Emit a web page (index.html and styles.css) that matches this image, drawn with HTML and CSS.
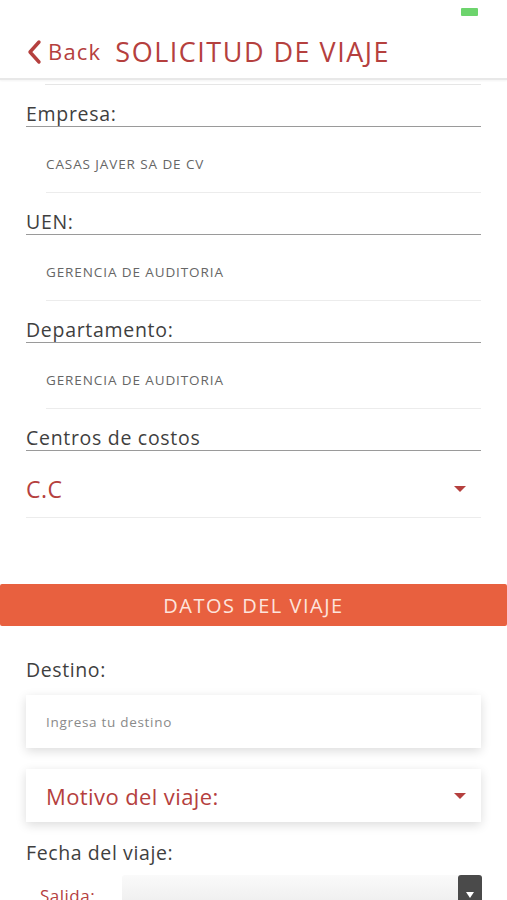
FILE: index.html
```html
<!DOCTYPE html>
<html lang="es">
<head>
<meta charset="utf-8">
<title>Solicitud de viaje</title>
<link rel="stylesheet" href="styles.css">
</head>
<body>
<div class="app">
  <div class="status"><span class="battery"></span></div>
  <header class="topbar">
    <a class="back">
      <svg class="chev" width="16" height="26" viewBox="0 0 16 26"><path d="M13 3 L4 13 L13 23" fill="none" stroke="#b5403e" stroke-width="3.4" stroke-linecap="round" stroke-linejoin="round"/></svg>
      <span>Back</span>
    </a>
    <h1 class="title">SOLICITUD DE VIAJE</h1>
  </header>
  <main class="content">
    <div class="topline"></div>
    <section class="field">
      <div class="label">Empresa:</div>
      <div class="value">CASAS JAVER SA DE CV</div>
    </section>
    <section class="field">
      <div class="label">UEN:</div>
      <div class="value">GERENCIA DE AUDITORIA</div>
    </section>
    <section class="field">
      <div class="label">Departamento:</div>
      <div class="value">GERENCIA DE AUDITORIA</div>
    </section>
    <section class="field">
      <div class="label">Centros de costos</div>
      <div class="select"><span>C.C</span><span class="caret"></span></div>
    </section>
    <div class="banner">DATOS DEL VIAJE</div>
    <div class="plain-label dest">Destino:</div>
    <div class="card input">Ingresa tu destino</div>
    <div class="card motivo"><span>Motivo del viaje:</span><span class="caret"></span></div>
    <div class="plain-label fecha">Fecha del viaje:</div>
    <div class="daterow">
      <span class="sal">Salida:</span>
      <div class="datebox"><span class="dbtn"><span class="wcaret"></span></span></div>
    </div>
  </main>
</div>
</body>
</html>
```
FILE: styles.css
```css
html, body { margin: 0; padding: 0; background: #fff; }
body { font-family: "Open Sans", "DejaVu Sans", sans-serif; color: #444; overflow: hidden; }
.app { width: 507px; height: 900px; overflow: hidden; }
.status { height: 24px; display: flex; justify-content: flex-end; align-items: flex-start; padding-right: 29px; }
.battery { margin-top: 8px; width: 17px; height: 8px; background: #6dd46d; border-radius: 1px; }
.topbar { height: 54px; display: flex; align-items: center; padding-left: 26px; border-bottom: 2px solid #e8e8e8; box-shadow: 0 1px 2px rgba(0,0,0,0.05); }
.back { display: flex; align-items: center; color: #b5403e; font-size: 22px; gap: 6px; letter-spacing: 1.2px; }
.chev { margin-top: 1px; }
.title { margin: 0 0 0 14px; font-weight: 400; font-size: 27px; color: #b5403e; letter-spacing: 1.5px; }
.content { display: flex; flex-direction: column; }
.topline { margin: 4px 26px 0 45px; height: 1px; background: #e6e6e6; }
.field { margin: 0 26px; }
.label { font-size: 19.5px; color: #3f3f3f; line-height: 24px; padding-top: 17px; border-bottom: 1px solid #9a9a9a; letter-spacing: 0.7px; }
.value { margin-left: 20px; height: 66px; display: flex; align-items: center; font-size: 13.5px; color: #666; border-bottom: 1px solid #ececec; padding-top: 8px; box-sizing: border-box; letter-spacing: 0.9px; }
.select { height: 67px; display: flex; align-items: center; justify-content: space-between; font-size: 23px; color: #b5403e; border-bottom: 1px solid #ececec; padding: 10px 15px 0 0; box-sizing: border-box; letter-spacing: 0.5px; }
.caret { width: 0; height: 0; border-left: 6px solid transparent; border-right: 6px solid transparent; border-top: 6px solid #b5403e; }
.banner { margin-top: 66px; height: 42px; background: #e8603f; color: #fde4dc; display: flex; align-items: center; justify-content: center; font-size: 20px; letter-spacing: 1.5px; border-radius: 2px; }
.plain-label { margin: 0 26px; font-size: 19.5px; color: #3f3f3f; line-height: 26px; letter-spacing: 0.6px; }
.dest { margin-top: 31px; }
.card { margin: 0 26px; height: 53px; box-sizing: border-box; background: #fff; box-shadow: 0 3px 10px rgba(0,0,0,0.14); display: flex; align-items: center; padding: 0 15px 0 20px; }
.input { margin-top: 12px; font-size: 13.5px; color: #8a8a8a; letter-spacing: 0.7px; }
.motivo { margin-top: 21px; justify-content: space-between; font-size: 22px; color: #b5403e; letter-spacing: 0.4px; }
.fecha { margin-top: 18px; }
.daterow { margin: 9px 25px 0 40px; display: flex; align-items: flex-start; gap: 18px; }
.sal { font-size: 17px; color: #b5403e; padding-top: 9px; width: 64px; letter-spacing: 0.5px; }
.datebox { flex: 1; height: 40px; background: linear-gradient(#fafafa, #eaeaea); display: flex; justify-content: flex-end; border-radius: 3px; }
.dbtn { width: 24px; height: 40px; background: #4a4a4a; border-radius: 3px 3px 0 0; display: flex; justify-content: center; padding-top: 17px; box-sizing: border-box; }
.wcaret { width: 0; height: 0; border-left: 4px solid transparent; border-right: 4px solid transparent; border-top: 6px solid #fff; }
```
